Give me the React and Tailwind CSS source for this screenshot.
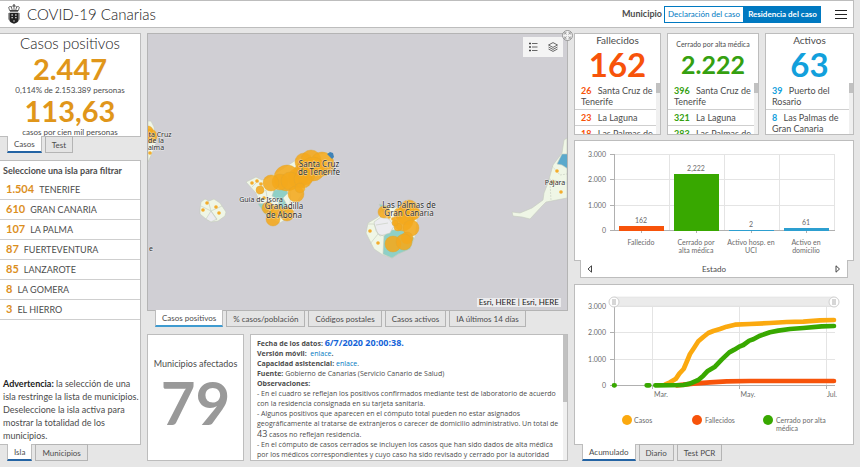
import React, { useState } from "react";

const ISLANDS = [
  ["1.504", "TENERIFE"],
  ["610", "GRAN CANARIA"],
  ["107", "LA PALMA"],
  ["87", "FUERTEVENTURA"],
  ["85", "LANZAROTE"],
  ["8", "LA GOMERA"],
  ["3", "EL HIERRO"],
];

const PANEL = "border border-[#bdbdbd] bg-white";

function Tabs({ label, items, className = "", accent = "border-b-[#2464a4]" }) {
  const [active, setActive] = useState(0);
  return (
    <div role="tablist" aria-label={label} className={`relative -mt-px flex shrink-0 gap-[3px] ${className}`}>
      {items.map((t, i) => (
        <button
          key={t}
          role="tab"
          aria-selected={i === active}
          onClick={() => setActive(i)}
          className={
            i === active
              ? `h-[17px] whitespace-nowrap border-x border-b-2 border-x-[#bdbdbd] bg-white px-[6px] text-[8px] leading-[14px] text-[#4c4c4c] ${accent}`
              : "h-[17px] whitespace-nowrap border border-[#b4b4b4] bg-[#e4e4e4] px-[6px] text-[8px] leading-[14px] text-[#4c4c4c]"
          }
        >
          {t}
        </button>
      ))}
    </div>
  );
}

function Crest() {
  return (
    <svg viewBox="0 0 36 60" className="h-5 w-3" aria-hidden="true">
      <g fill="none" stroke="#222" strokeWidth="2">
        <path d="M5 20 L2 10 Q6 5 10 9 Q13 3 18 7 Q23 3 26 9 Q31 5 34 10 L31 20 Z" />
        <path d="M10 9 L13 19 M26 9 L23 19 M18 1 V19 M15 3 H21" />
      </g>
      <path d="M6 18 H30 V23 H6 Z" fill="#444" />
      <path d="M4 26 H32 V48 Q31 56 18 59 Q5 56 4 48 Z" fill="#222" />
      <path
        d="M10 31 h5 v4 h-5z M21 31 h5 v4 h-5z M10 39 h5 v4 h-5z M21 39 h5 v4 h-5z M16 49 h4 v4 h-4z"
        fill="#bbb"
      />
      <path d="M1 27 V47 M35 27 V47" stroke="#555" strokeWidth="2" />
    </svg>
  );
}

const BIG = [
  [304, 162, 9], [306, 168, 9], [311, 160, 10], [322, 164, 12], [313, 169, 12], [304, 174, 11],
  [298, 178, 10], [287, 178, 13], [280, 182, 8], [290, 181, 9], [271, 183, 8], [296, 194, 8],
  [303, 179, 9], [300, 188, 5], [273, 219, 7], [287, 214, 7], [268, 208, 6], [277, 211, 6], [260, 190, 4],
  [384, 212, 6], [409, 209, 9], [406, 215, 10], [413, 213, 7], [403, 221, 10], [411, 228, 8], [407, 238, 6],
  [393, 244, 8], [404, 242, 8], [399, 213, 5], [398, 227, 4], [395, 223, 3], [150, 136, 7], [148, 131, 5],
];
const SMALL = [
  [252, 183], [257, 181], [261, 184], [264, 198], [207, 203], [203, 210], [216, 207], [219, 213],
  [370, 231], [378, 243], [393, 219], [389, 217], [557, 171], [553, 182], [561, 192], [150, 153],
];

function MapLabel({ x, y, children, size = 8 }) {
  return (
    <text
      x={x}
      y={y}
      fontSize={size}
      textAnchor="middle"
      fill="#303030"
      stroke="#fff"
      strokeOpacity="0.55"
      strokeWidth="1"
      paintOrder="stroke"
      fontFamily="'Noto Sans', sans-serif"
    >
      {children}
    </text>
  );
}

function IslandMap() {
  return (
    <svg
      viewBox="148 34 419 276"
      preserveAspectRatio="xMidYMid slice"
      className="absolute inset-0 h-full w-full"
      role="img"
      aria-label="Mapa de casos positivos"
    >
      <g stroke="#c4cbbd" strokeWidth="0.6">
        <path d="M148 121 L151 121 L154 127 L155 135 L156 143 L153 151 L148 162 Z" fill="#f0f6e6" />
        <path d="M200 209 L201 202 L205 199 L209 201 L214 199 L220 203 L226 212 L225 216 L218 221 L211 222 L206 219 L200 214 Z" fill="#eff6e6" />
        <path d="M206 219 L211 211 L217 219 L211 222 Z" fill="#ececf0" />
        <path d="M208 200 L211 211 L201 206 M211 211 L222 206 M211 211 L217 220" fill="none" />
        <path d="M246 182 L256 177 L262 180 L268 178 L281 170 L299 158 L330 152 L334 156 L326 168 L310 182 L298 200 L292 215 L280 223 L270 218 L262 208 L256 193 Z" fill="#eff6e6" />
        <path d="M252 187 L258 181 L263 188 M258 195 L266 190 L268 204 M282 190 L291 188 L290 204" fill="none" />
        <path d="M272 196 L274 190 L286 189 L288 193 L283 198 L287 205 L284 220 L278 215 L279 200 Z M258 204 L268 203 L270 217 L265 214 Z" fill="#8fd0c6" />
        <path d="M366 233 L368 223 L378 217 L382 210 L380 205 L393 208 L413 203 L417 220 L415 237 L410 248 L398 254 L392 258 L383 255 L374 249 Z" fill="#eff6e6" />
        <path d="M384 236 L390 230 L402 230 L414 238 L410 249 L398 254 L392 258 L383 254 Z M379 204 L390 207 L384 214 Z" fill="#8fd0c6" />
        <path d="M374 222 L381 217 L389 219 L394 226 L390 233 L380 236 L376 231 Z" fill="#ececf0" />
        <path d="M368 224 L374 224 L378 234 L370 244 M376 225 L388 223 M378 234 L384 236" fill="none" />
        <path d="M567 138 L564 140 L562 153 L553 165 L548 183 L544 193 L543 200 L532 208 L520 213 L512 212 L513 216 L522 217 L530 219 L542 206 L546 202 L567 198 Z" fill="#eff6e6" />
        <path d="M557 164 L562 154 L568 154 L568 169 L562 165 Z" fill="#5ba9cc" />
        <path d="M552 166 L560 175 L567 174 M549 179 L567 183 M550 183 L551 200" fill="none" strokeDasharray="2 1" />
      </g>
      <g fill="#f4a91c" fillOpacity="0.88" stroke="#dfa52f" strokeOpacity="0.8" strokeWidth="0.5">
        {BIG.map(([x, y, r]) => (
          <circle key={`${x}-${y}`} cx={x} cy={y} r={r} />
        ))}
      </g>
      <path d="M327 154 L330 152 L333 153 L334 157 L332 159 Z" fill="#3f83b8" />
      <g fill="#f4ad2b">
        {SMALL.map(([x, y]) => (
          <circle key={`${x}-${y}`} cx={x} cy={y} r="1.8" />
        ))}
      </g>
      <MapLabel x={319} y={167}>Santa Cruz</MapLabel>
      <MapLabel x={319} y={175}>de Tenerife</MapLabel>
      <MapLabel x={261} y={202} size={7}>Guía de Isora</MapLabel>
      <MapLabel x={284} y={209}>Granadilla</MapLabel>
      <MapLabel x={284} y={218}>de Abona</MapLabel>
      <MapLabel x={409} y={208}>Las Palmas de</MapLabel>
      <MapLabel x={409} y={216}>Gran Canaria</MapLabel>
      <MapLabel x={555} y={185} size={7}>Pájara</MapLabel>
      <MapLabel x={160} y={137} size={7}>ta Cruz</MapLabel>
      <MapLabel x={156} y={143} size={7}>de la</MapLabel>
      <MapLabel x={156} y={150} size={7}>alma</MapLabel>
      <MapLabel x={151} y={251} size={7}>e</MapLabel>
    </svg>
  );
}

function StatCard({ title, value, color, rows, titleClass, valueClass }) {
  return (
    <section className={`${PANEL} flex h-[102px] min-w-0 flex-col overflow-hidden`}>
      <h2 className={`text-center text-[#4c4c4c] ${titleClass}`}>{title}</h2>
      <p className={`text-center font-bold ${color} ${valueClass}`}>{value}</p>
      <div className="mt-auto flex h-[51px] shrink-0 overflow-hidden">
        <ul className="min-w-0 flex-1">
          {rows.map(([n, name]) => (
            <li key={name} className="border-b border-[#cfcfcf] py-[2px] pl-[6px] text-[9px] leading-[11px] text-[#4c4c4c]">
              <b className={`mr-1 ${color}`}>{n}</b> {name}
            </li>
          ))}
        </ul>
        <div className="w-1 bg-[#f0f0f0]">
          <div className="h-[10px] bg-[#c1c1c1]" />
        </div>
      </div>
    </section>
  );
}

const STATES = [
  [619, 226, "162", "#f7530a", ["Fallecido"]],
  [674, 174, "2,222", "#38a800", ["Cerrado por", "alta médica"]],
  [729, 230, "2", "#2d9fd0", ["Activo hosp. en", "UCI"]],
  [784, 228, "61", "#2d9fd0", ["Activo en", "domicilio"]],
];

function StateChart() {
  return (
    <svg viewBox="575 141 278 119" className="w-full" role="img" aria-label="Casos por estado" fontSize="7" fill="#6b6b6b">
      <path
        d="M614 154.5 H835 M614 179.5 H835 M614 205.5 H835 M669.5 154 V230 M724.5 154 V230 M779.5 154 V230 M834.5 154 V230"
        stroke="#e4e4e4"
      />
      {["3.000", "2.000", "1.000", "0"].map((t, i) => (
        <text key={t} x="606" y={[157, 182, 208, 233][i]} textAnchor="end">{t}</text>
      ))}
      <path d="M610 154.5 H614 M610 179.5 H614 M610 205.5 H614 M610 230.5 H835 M614.5 154 V231 M641.5 230 V233 M696.5 230 V233 M751.5 230 V233 M806.5 230 V233" stroke="#b0b0b0" />
      {STATES.map(([x, y, n, c, lines]) => (
        <g key={x} textAnchor="middle">
          <rect x={x} y={y} width="45" height={231 - y} fill={c} />
          <text x={x + 22} y={y - 3}>{n}</text>
          {lines.map((l, i) => (
            <text key={l} x={x + 22} y={245 + i * 8}>{l}</text>
          ))}
        </g>
      ))}
    </svg>
  );
}

function Handle({ x }) {
  return (
    <g>
      <circle cx={x} cy="302" r="5" fill="#fff" stroke="#cfcfcf" />
      <path d={`M${x - 1} 299 V305 M${x + 1} 299 V305`} stroke="#9a9a9a" strokeWidth="0.8" />
    </g>
  );
}

function TimeChart() {
  return (
    <svg viewBox="575 285 278 159" className="w-full" role="img" aria-label="Evolución acumulada" fontSize="7" fill="#6b6b6b">
      <path
        d="M614 306.5 H835 M614 332.5 H835 M614 359.5 H835 M652.5 306 V385 M739.5 306 V385 M826.5 306 V385"
        stroke="#e4e4e4"
      />
      {["3.000", "2.000", "1.000", "0"].map((t, i) => (
        <text key={t} x="606" y={[309, 335, 362, 388][i]} textAnchor="end">{t}</text>
      ))}
      <path d="M610 332.5 H614 M610 359.5 H614 M610 385.5 H835 M614.5 306 V386 M652.5 385 V389 M739.5 385 V389 M826.5 385 V389" stroke="#b0b0b0" />
      <text x="661" y="397" textAnchor="middle">Mar.</text>
      <text x="748" y="397" textAnchor="middle">May.</text>
      <text x="832" y="397" textAnchor="middle">Jul.</text>
      <rect x="614" y="297" width="220" height="9" fill="#ebebeb" stroke="#dcdcdc" strokeWidth="0.5" />
      <Handle x={614} />
      <Handle x={834} />
      <g transform="translate(570 280) scale(0.3333)" fill="none" strokeWidth="14" strokeLinejoin="round" strokeLinecap="round">
        <path d="M286 313 L300 307 L318 296 L328 281 L341 267 L350 246 L360 222 L372 204 L385 184 L400 171 L415 159 L430 153 L450 147 L470 140 L495 134 L540 132 L600 129 L650 126 L700 125 L750 121 L792 120" stroke="#fba90f" />
        <path d="M320 316 L370 311 L420 307 L470 304 L540 303 L792 303" stroke="#f7530a" />
        <path d="M132 316 h2 M230 316 h8 M256 316 L340 315 L360 311 L385 300 L400 287 L412 274 L435 260 L455 239 L478 217 L493 209 L510 199 L520 195 L538 182 L550 178 L568 168 L600 157 L625 152 L660 147 L700 144 L755 139 L792 138" stroke="#38a800" />
      </g>
      <circle cx="627" cy="420" r="5" fill="#fba90f" />
      <text x="634" y="423">Casos</text>
      <circle cx="697" cy="420" r="5" fill="#f7530a" />
      <text x="705" y="423">Fallecidos</text>
      <circle cx="768" cy="420" r="5" fill="#38a800" />
      <text x="776" y="423">Cerrado por alta</text>
      <text x="776" y="431">médica</text>
    </svg>
  );
}

export default function App() {
  return (
    <div className="flex min-h-screen flex-col bg-[#e6e6e6] pr-[6px] font-[Lato,'Open_Sans',sans-serif] text-[#4c4c4c]">
      <header className="flex h-7 shrink-0 items-center border-y border-r border-[#bdbdbd] bg-white pl-2 pr-[6px]">
        <Crest />
        <h1 className="ml-[7px] text-[15px] font-light leading-5 text-[#222]">COVID-19 Canarias</h1>
        <div role="group" aria-labelledby="scope" className="ml-auto flex items-center text-[8px]">
          <span id="scope" className="mr-[2px] text-[9px] font-bold">Municipio</span>
          <button className="h-[17px] w-20 whitespace-nowrap border border-[#0079c1] text-[#0079c1]">Declaración del caso</button>
          <button className="h-[17px] w-[77px] whitespace-nowrap bg-[#0079c1] font-bold text-white">Residencia del caso</button>
        </div>
        <button aria-label="Menú" className="ml-[14px] flex w-3 flex-col gap-[3px]">
          <span className="h-px w-full bg-[#222]" />
          <span className="h-px w-full bg-[#222]" />
          <span className="h-px w-full bg-[#222]" />
        </button>
      </header>

      <main className="grid flex-1 grid-cols-[141fr_421fr_280fr] gap-x-[6px] pb-[6px] pt-[5px]">
        <div className="flex min-w-0 flex-col">
          <section className={`${PANEL} h-[104px] overflow-hidden border-l-0 text-center`}>
            <h2 className="text-[15px] font-light leading-[19px] text-[#222]">Casos positivos</h2>
            <p className="text-[29px] font-bold leading-8 text-[#e0961a]">2.447</p>
            <p className="text-[8px] leading-[10px]">0,114% de 2.153.389 personas</p>
            <p className="text-[29px] font-bold leading-8 text-[#e0961a]">113,63</p>
            <p className="text-[8px] leading-[10px]">casos por cien mil personas</p>
          </section>
          <Tabs label="Indicadores" items={["Casos", "Test"]} className="pl-[7px]" />

          <section className={`${PANEL} mt-[7px] flex flex-1 flex-col border-l-0`}>
            <h2 className="px-[3px] pb-[3px] pt-1 text-[9px] font-bold leading-3">Seleccione una isla para filtrar</h2>
            <ul>
              {ISLANDS.map(([n, name]) => (
                <li key={name} className="border-b border-[#cfcfcf]">
                  <button className="flex h-[19px] w-full items-center gap-[5px] pl-[6px] text-[9px]">
                    <b className="text-[11px] text-[#dc8f1e]">{n}</b>
                    {name}
                  </button>
                </li>
              ))}
            </ul>
            <p className="mt-auto whitespace-nowrap pb-[2px] pl-[3px] text-[9px] leading-[13px]">
              <b className="text-[#222]">Advertencia:</b> la selección de una
              <br />
              isla restringe la lista de municipios.
              <br />
              Deseleccione la isla activa para
              <br />
              mostrar la totalidad de los
              <br />
              municipios.
            </p>
          </section>
          <Tabs label="Ámbito" items={["Isla", "Municipios"]} className="pl-[7px]" />
        </div>

        <div className="flex min-w-0 flex-col">
          <section className="relative flex-1 border border-[#b4b4b4] bg-[#d0cfd4]">
            <IslandMap />
            <div className="absolute right-1 top-[3px] flex h-5 w-10 items-center justify-around bg-[#f4f4f4]">
              <button aria-label="Leyenda">
                <svg viewBox="0 0 10 10" className="size-[10px]" stroke="#444" fill="none">
                  <path d="M1 1.5 H3 M1 5 H3 M1 8.5 H3" strokeWidth="1.6" />
                  <path d="M4 1.5 H9.500 M4 5 H9.500 M4 8.500 H9.500" strokeWidth="0.8" />
                </svg>
              </button>
              <button aria-label="Capas">
                <svg viewBox="0 0 10 10" className="size-[10px]" stroke="#444" strokeWidth="0.8" fill="none">
                  <path d="M5 0.600 L9.500 3 L5 5.400 L0.500 3 Z M0.500 5 L5 7.400 L9.500 5 M0.500 7 L5 9.400 L9.500 7" />
                </svg>
              </button>
            </div>
            <button aria-label="Expandir" className="absolute -right-[6px] -top-[4px]">
              <svg viewBox="0 0 12 12" className="size-[11px]" fill="none" stroke="#8a8a8a">
                <circle cx="6" cy="6" r="5.400" fill="#f4f4f4" />
                <path d="M3 5 V3 H5 M7 3 H9 V5 M9 7 V9 H7 M5 9 H3 V7 M3 3 L5 5 M9 3 L7 5 M9 9 L7 7 M3 9 L5 7" strokeWidth="0.8" />
              </svg>
            </button>
            <p className="absolute bottom-[3px] right-[6px] bg-[#ececee] px-[2px] text-[8px] leading-[9px] text-[#222]">
              Esri, HERE | Esri, HERE
            </p>
          </section>
          <Tabs
            label="Mapas"
            items={["Casos positivos", "% casos/población", "Códigos postales", "Casos activos", "IA últimos 14 días"]}
            className="pl-2"
            accent="border-b-[#3f9bd0]"
          />
          <div className="mt-[7px] grid h-[127px] shrink-0 grid-cols-[97fr_318fr] gap-[6px]">
            <section className={`${PANEL} min-w-0 pt-[23px] text-center`}>
              <h2 className="text-[9px] leading-3">Municipios afectados</h2>
              <p className="text-[60px] font-bold leading-[64px] text-[#999]">79</p>
            </section>
            <section className={`${PANEL} flex min-w-0 overflow-hidden`}>
              <div className="min-w-0 flex-1 overflow-hidden whitespace-nowrap pl-[6px] pt-[3px] font-['Open_Sans',sans-serif] text-[7px] leading-[10px]">
                <p><b>Fecha de los datos: <span className="text-[9px] text-[#1463d8]">6/7/2020 20:00:38.</span></b></p>
                <p><b>Versión móvil:</b>&nbsp; <a href="#movil" className="text-[#0079c1]">enlace</a><b>.</b></p>
                <p><b>Capacidad asistencial:</b> <a href="#capacidad" className="text-[#0079c1]">enlace</a>.</p>
                <p><b>Fuente:</b> Gobierno de Canarias (Servicio Canario de Salud)</p>
                <p><b>Observaciones:</b></p>
                <p>- En el cuadro se reflejan los positivos confirmados mediante test de laboratorio de acuerdo<br />con la residencia consignada en su tarjeta sanitaria.</p>
                <p>- Algunos positivos que aparecen en el cómputo total pueden no estar asignados<br />geográficamente al tratarse de extranjeros o carecer de domicilio administrativo. Un total de<br /><span className="text-[9px]">43</span> casos no reflejan residencia.</p>
                <p>- En el cómputo de casos cerrados se incluyen los casos que han sido dados de alta médica<br />por los médicos correspondientes y cuyo caso ha sido revisado y cerrado por la autoridad</p>
              </div>
              <div className="w-1 shrink-0 bg-[#f0f0f0]">
                <div className="h-[67px] bg-[#c1c1c1]" />
              </div>
            </section>
          </div>
        </div>

        <div className="flex min-w-0 flex-col">
          <div className="grid grid-cols-[87fr_92fr_89fr] gap-[6px]">
            <StatCard
              title="Fallecidos"
              value="162"
              color="text-[#f7530a]"
              titleClass="text-[10px] leading-3"
              valueClass="text-[33px] leading-9"
              rows={[["26", "Santa Cruz de Tenerife"], ["23", "La Laguna"], ["18", "Las Palmas de"]]}
            />
            <StatCard
              title="Cerrado por alta médica"
              value="2.222"
              color="text-[#35a010]"
              titleClass="whitespace-nowrap pt-[4px] text-[7px] leading-3"
              valueClass="text-[25px] leading-7"
              rows={[["396", "Santa Cruz de Tenerife"], ["321", "La Laguna"], ["283", "Las Palmas de"]]}
            />
            <StatCard
              title="Activos"
              value="63"
              color="text-[#12a0dc]"
              titleClass="text-[10px] leading-3"
              valueClass="text-[33px] leading-9"
              rows={[["39", "Puerto del Rosario"], ["8", "Las Palmas de Gran Canaria"]]}
            />
          </div>

          <section className="mt-[5px]">
            <div className={PANEL}><StateChart /></div>
            <div className="relative mx-[6px] -mt-px flex h-[18px] items-center justify-between border border-t-0 border-[#bdbdbd] bg-white px-[6px]">
              <button aria-label="Anterior">
                <svg viewBox="0 0 6 8" className="h-2 w-[6px]" fill="none" stroke="#444"><path d="M4.500 0.800 V7.200 L1 4 Z" /></svg>
              </button>
              <span className="text-[8px]">Estado</span>
              <button aria-label="Siguiente">
                <svg viewBox="0 0 6 8" className="h-2 w-[6px]" fill="none" stroke="#444"><path d="M1 0.800 V7.200 L4.500 4 Z" /></svg>
              </button>
            </div>
          </section>

          <section className="mt-[6px]">
            <div className={PANEL}><TimeChart /></div>
            <Tabs label="Series" items={["Acumulado", "Diario", "Test PCR"]} className="pl-2" />
          </section>
        </div>
      </main>
    </div>
  );
}
